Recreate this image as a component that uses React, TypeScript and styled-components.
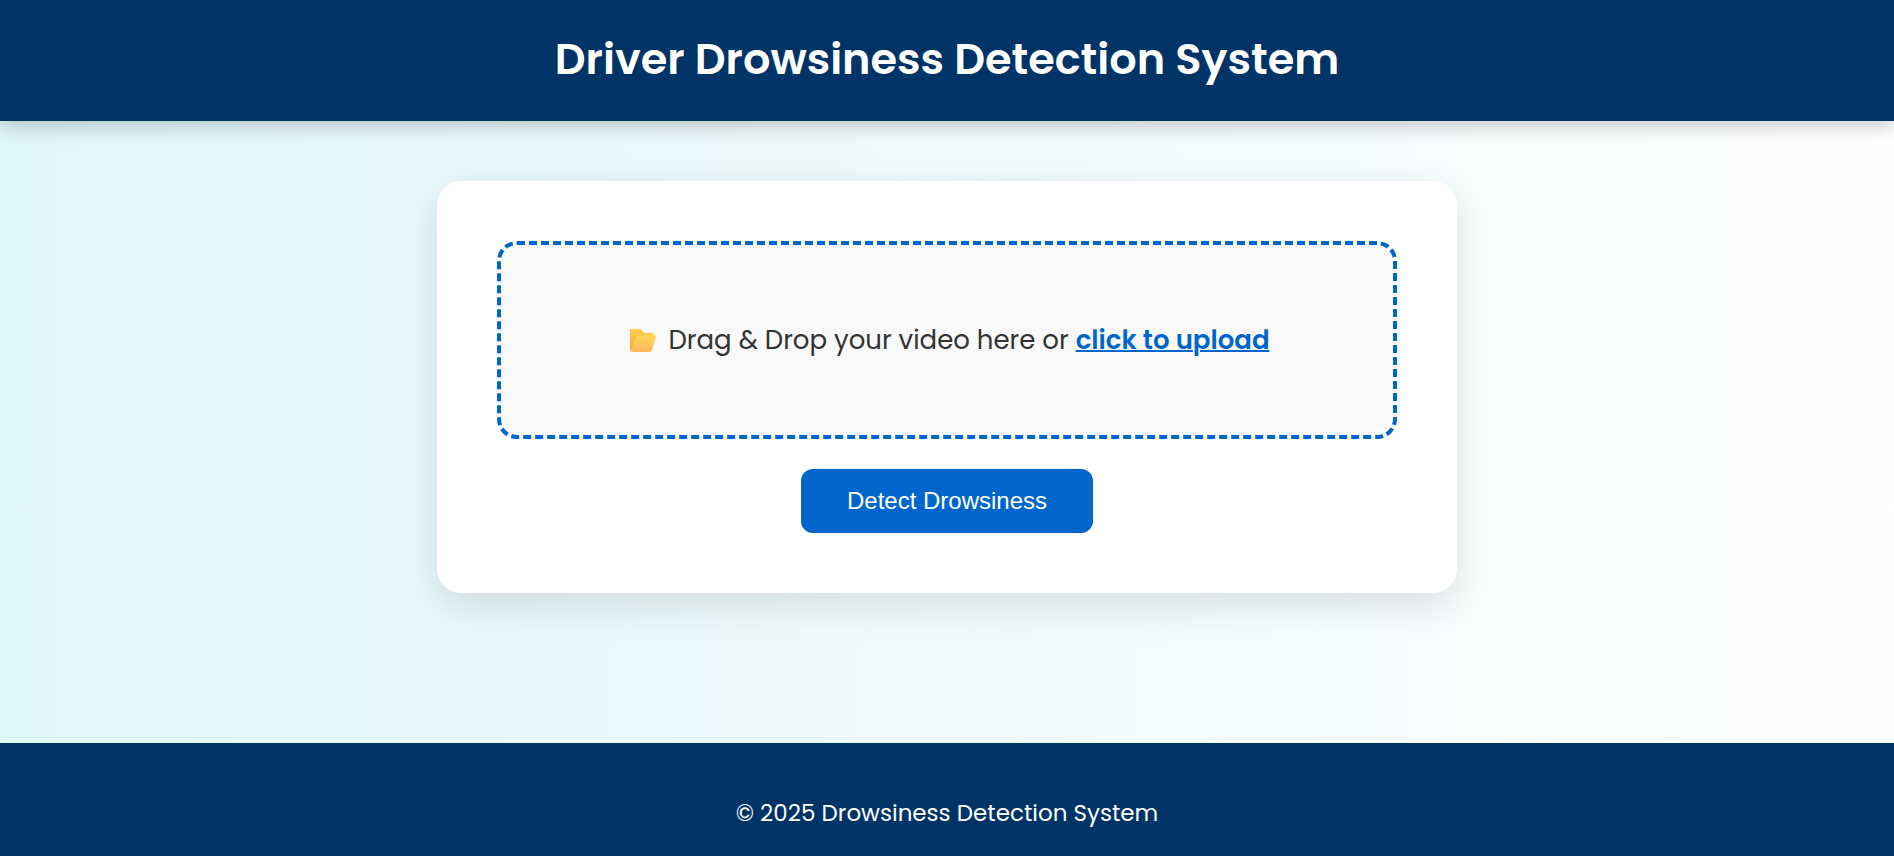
import React from "react";
import styled, { createGlobalStyle } from "styled-components";

const GlobalStyle = createGlobalStyle`
  *, *::before, *::after { box-sizing: border-box; }
  body {
    margin: 0;
    font-family: Poppins, Inter, "Liberation Sans", sans-serif;
    color: #333;
  }
`;

const Page = styled.div`
  min-height: 100vh;
  display: flex;
  flex-direction: column;
  background: linear-gradient(to right, #e0f7fa, #ffffff);
`;

const Header = styled.header`
  padding: 26px 24px 28px;
  background: #003366;
  color: #fff;
  text-align: center;
  box-shadow: 0 6px 18px rgba(0, 0, 0, 0.2);
`;

const Title = styled.h1`
  margin: 0;
  font-size: 43px;
  font-weight: 600;
  line-height: 67px;
`;

const Main = styled.main`
  flex: 1;
  padding: 60px 24px 150px;
`;

const Card = styled.form`
  display: flex;
  flex-direction: column;
  align-items: center;
  gap: 30px;
  max-width: 1020px;
  margin: 0 auto;
  padding: 60px;
  border-radius: 24px;
  background: #fff;
  box-shadow: 0 12px 40px rgba(0, 0, 0, 0.12);
`;

const DropZone = styled.div`
  display: flex;
  align-items: center;
  justify-content: center;
  gap: 12px;
  width: 100%;
  padding: 74px 20px;
  border: 4px dashed #0066cc;
  border-radius: 20px;
  background: #f9f9f9;
  font-size: 26px;
  line-height: 42px;
`;

const Folder = styled.svg`
  flex: none;
  width: 32px;
  height: 24px;
`;

const Prompt = styled.p`
  margin: 0;
`;

const UploadLabel = styled.label`
  color: #0066cc;
  font-weight: 600;
  text-decoration: underline;
  text-decoration-thickness: 2px;
  cursor: pointer;
`;

const DetectButton = styled.button`
  padding: 18px 46px;
  border: 0;
  border-radius: 12px;
  background: #0066cc;
  color: #fff;
  font-family: "Liberation Sans", Arial, sans-serif;
  font-size: 24px;
  line-height: 28px;
  cursor: pointer;
`;

const Footer = styled.footer`
  padding: 52px 24px;
  background: #003366;
  color: #fff;
  text-align: center;
`;

const Copyright = styled.p`
  margin: 0;
  font-size: 23px;
  line-height: 36px;
`;

export default function App() {
  return (
    <>
      <GlobalStyle />
      <Page>
        <Header>
          <Title>Driver Drowsiness Detection System</Title>
        </Header>
        <Main>
          <Card onSubmit={(e: React.FormEvent) => e.preventDefault()}>
            <DropZone>
              <Folder viewBox="-6 0 32 24" aria-hidden="true">
                <defs>
                  <linearGradient id="folder-back" x1="0" y1="0" x2="0" y2="1">
                    <stop offset="0" stopColor="#ffce4f" />
                    <stop offset="1" stopColor="#f9a336" />
                  </linearGradient>
                  <linearGradient id="folder-front" x1="0" y1="0" x2="0" y2="1">
                    <stop offset="0" stopColor="#ffda4e" />
                    <stop offset="1" stopColor="#ffb661" />
                  </linearGradient>
                </defs>
                <path
                  d="M0 2Q0 1 1 1H9.5Q10.5 1 11.2 1.7L13.4 4.2Q14 5 15 5H22Q23.5 5 23.5 6.5V9L19 23H2Q0 23 0 21Z"
                  fill="url(#folder-back)"
                />
                <path
                  d="M6.2 9Q6.8 7.6 8.2 7.6H11Q12 7.6 12.8 7.1L13.2 6.9Q14 6.5 15 6.5H24Q26.4 6.7 25.8 9L21.8 22Q21.3 24 19.5 24H2.2Q0.2 24 0.8 22Z"
                  fill="url(#folder-front)"
                />
              </Folder>
              <Prompt>
                Drag &amp; Drop your video here or{" "}
                <UploadLabel htmlFor="video">click to upload</UploadLabel>
              </Prompt>
              <input id="video" type="file" accept="video/*" hidden />
            </DropZone>
            <DetectButton type="submit">Detect Drowsiness</DetectButton>
          </Card>
        </Main>
        <Footer>
          <Copyright>© 2025 Drowsiness Detection System</Copyright>
        </Footer>
      </Page>
    </>
  );
}
